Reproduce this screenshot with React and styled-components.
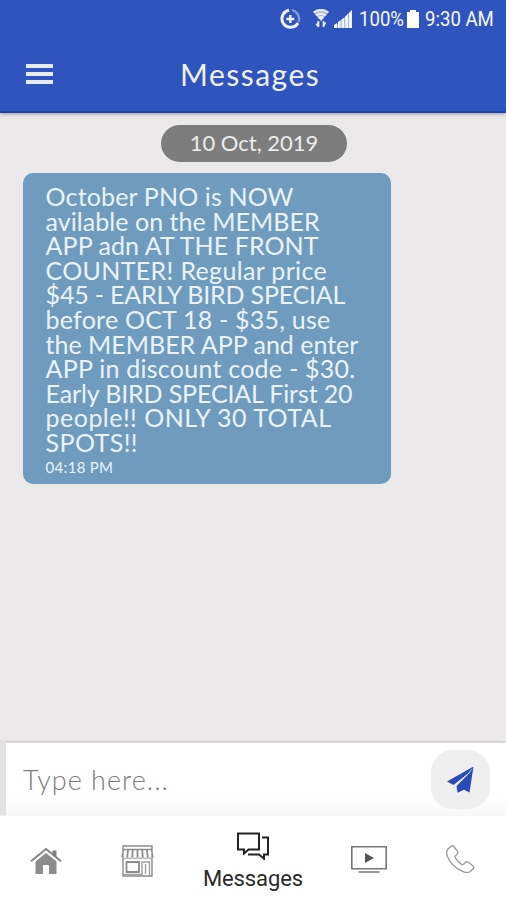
import React from 'react';
import styled, { createGlobalStyle } from 'styled-components';

const GlobalStyle = createGlobalStyle`
* { box-sizing: border-box; }
body { margin: 0; background: #ebe9ea; }
`;

const Screen = styled.div`
width: 506px;
height: 900px;
display: flex;
flex-direction: column;
overflow: hidden;
background: #ebe9ea;
font-family: Lato, "Liberation Sans", sans-serif;
`;

const Header = styled.header`
height: 113px;
flex: none;
background: #3054be;
border-bottom: 2px solid #1746a8;
box-shadow: 0 1px 4px rgba(0, 0, 0, 0.35);
color: #fff;
`;

const StatusBar = styled.div`
height: 37px;
display: flex;
align-items: center;
padding-left: 280px;
`;

const StatusIcon = styled.svg`
flex: none;
margin-left: ${(props) => props.$gap || 0}px;
`;

const StatusText = styled.span`
flex: none;
width: ${(props) => props.$width}px;
margin-left: ${(props) => props.$gap}px;
font: 400 20px/38px Roboto, sans-serif;
color: #f6f8ff;
white-space: nowrap;
transform: scaleX(0.93);
transform-origin: left;
`;

const TitleBar = styled.div`
height: 74px;
display: flex;
align-items: center;
padding-left: 26px;
`;

const MenuButton = styled.div`
width: 27px;
height: 20px;
display: flex;
flex-direction: column;
justify-content: space-between;
`;

const MenuLine = styled.div`
height: 4px;
background: #e6ebfb;
`;

const Title = styled.h1`
margin: 0 0 1px 127px;
font-size: 30px;
font-weight: 400;
letter-spacing: 1.5px;
color: #edf1fd;
`;

const Thread = styled.main`
flex: 1;
display: flex;
flex-direction: column;
padding: 12px 0 0 23px;
`;

const DateChip = styled.div`
width: 186px;
height: 37px;
margin: 0 0 11px 138px;
border-radius: 19px;
background: #7d7d7d;
color: #ececec;
font-size: 22px;
line-height: 36px;
text-align: center;
`;

const Bubble = styled.section`
width: 368px;
height: 311px;
padding: 11px 0 0 22.6px;
border-radius: 10px;
background: #6f9bbf;
color: #eaf3fb;
`;

const Line = styled.div`
height: 24.6px;
font-size: 25px;
line-height: 24.6px;
letter-spacing: ${(props) => props.$spacing}px;
white-space: nowrap;
`;

const Time = styled.div`
font-size: 15px;
line-height: 25px;
letter-spacing: 0.3px;
`;

const Composer = styled.div`
height: 75px;
flex: none;
display: flex;
align-items: center;
margin-left: 6px;
padding: 0 16px 0 17px;
border-top: 2px solid #d9d7d8;
background: linear-gradient(#fff 75%, #f7f7f7);
box-shadow: -6px -1px 0 0 #e3e1e2;
`;

const Placeholder = styled.div`
flex: 1;
font-size: 27px;
font-weight: 300;
letter-spacing: 1px;
color: #7c7c7c;
`;

const SendButton = styled.div`
width: 59px;
height: 59px;
display: flex;
align-items: center;
justify-content: center;
border-radius: 22px;
background: #efefef;
`;

const NavBar = styled.nav`
height: 84px;
flex: none;
display: grid;
grid-template-columns: 91px 92px 140px 92px 91px;
background: #fff;
z-index: 1;
`;

const NavItem = styled.div`
display: flex;
flex-direction: column;
align-items: center;
padding-top: ${(props) => props.$top}px;
`;

const NavLabel = styled.span`
margin-top: 6px;
font: 400 22px/26px Roboto, sans-serif;
letter-spacing: -0.1px;
color: #2a2a2a;
`;

const message = [
    { text: 'October PNO is NOW', spacing: 0.14 },
    { text: 'avilable on the MEMBER', spacing: 0.05 },
    { text: 'APP adn AT THE FRONT', spacing: 0.07 },
    { text: 'COUNTER! Regular price', spacing: 0.33 },
    { text: '$45 - EARLY BIRD SPECIAL', spacing: -0.2 },
    { text: 'before OCT 18 - $35, use', spacing: 0.22 },
    { text: 'the MEMBER APP and enter', spacing: 0 },
    { text: 'APP in discount code - $30.', spacing: 0.24 },
    { text: 'Early BIRD SPECIAL First 20', spacing: -0.14 },
    { text: 'people!! ONLY 30 TOTAL', spacing: 0.47 },
    { text: 'SPOTS!!', spacing: 0.4 },
];

const StatusIcons = () => {
    return(
        <>
            <StatusIcon width="21" height="22" viewBox="0 0 21 22" fill="none">
                <path d="M9 2.2A8.6 8.6 0 1 0 18 15" stroke="#f0f4ff" strokeWidth="3" />
                <path d="M12 2.2A8.8 8.8 0 0 1 18.4 14" stroke="#7f9ae0" strokeWidth="2.4" />
                <path d="M10.3 7v8M6.3 11h8" stroke="#f0f4ff" strokeWidth="2.4" />
            </StatusIcon>
            <StatusIcon $gap={12} width="16" height="19" viewBox="0 0 16 19" fill="none" stroke="#e8eeff" strokeWidth="2">
                <path d="M.2 3Q8-3 15.800 3L8 12z" fill="#a9baeb" stroke="none" />
                <path d="M.7 3.5Q8-1.6 15.3 3.5M3 6.5Q8 2.8 13 6.5M5.3 9Q8 7 10.7 9" />
                <path d="M6 9h4l-2 3z" fill="#e8eeff" stroke="none" />
                <path d="M5.500 12v6M10.500 12v6" strokeWidth="1.6" />
                <path d="M3 16l2.500-4v6zM13 14l-2.500 4v-5z" fill="#e8eeff" strokeWidth=".5" />
            </StatusIcon>
            <StatusIcon $gap={5} width="18" height="18" viewBox="0 0 18 18" fill="#f0f4ff">
                <path d="M0 18v-3l3-2v5zM4 18v-6l2.6-2v8zM7.500 18V9.500l2.800-2V18zM11.200 18V6.500L14 4v14zM14.800 18V3L18 0v18z" />
                <path d="M0 17.500L18 0v18H0z" opacity=".5" />
            </StatusIcon>
        </>
    )
}

const HomeIcon = () => (
    <svg width="32" height="28" viewBox="0 0 32 28">
        <path d="M1 14.2L16 2l15 12.2" fill="none" stroke="#858585" strokeWidth="2" />
        <path d="M22.5 3.5h4v7l-4-3.2z" fill="#808080" />
        <path d="M5.5 14.5L16 6l10.5 8.5V27H19v-8q0-1-1-1h-4q-1 0-1 1v8H5.5z" fill="#8c8c8c" />
    </svg>
);

const StoreIcon = () => (
    <svg width="33" height="32" viewBox="0 0 33 32" fill="none" stroke="#8c8c8c" strokeWidth="1.4">
        <path d="M2 1h29v30H2zM2 4.5h29M1 12.5L2.5 5M32 12.5L30.5 5" />
        <path d="M7 5l-.8 7.500M11.700 5l-.4 7.500M16.500 5v7.500M21.300 5l.4 7.500M26 5l.8 7.500" strokeWidth="1.8" />
        <path d="M1 12.500q2.600 2 5.200 0 2.600 2 5.200 0 2.600 2 5.200 0 2.600 2 5.200 0 2.600 2 5.200 0 2.600 2 5.200 0" stroke="#aaa" />
        <path d="M5.500 17h12.500v10h-12.500z" strokeWidth="1.8" />
        <path d="M21 31V17h7.500v14M24.500 19v10M2 29.500h18.500" stroke="#a0a0a0" />
    </svg>
);

const ChatIcon = () => (
    <svg width="32" height="28" viewBox="0 0 32 28" fill="none" stroke="#222" strokeWidth="2">
        <path d="M1 1.5h21v16H11.5L7 21.5v-4H1z" />
        <path d="M25 5.5h6v17h-4v4.2l-5-4.2H11" />
    </svg>
);

const VideoIcon = () => (
    <svg width="36" height="28" viewBox="0 0 36 28">
        <path d="M.8.8h34.4v22H.8z" fill="none" stroke="#777" strokeWidth="1.6" />
        <path d="M14 7l9 5-9 5z" fill="#555" />
        <path d="M7.5 26h21" stroke="#999" strokeWidth="2" />
    </svg>
);

const PhoneIcon = () => (
    <svg width="29" height="29" viewBox="0 0 29 29" fill="none" stroke="#999" strokeWidth="1.3" strokeLinejoin="round">
        <path d="M2.2 3.8L5 1.2q1.6-1 2.8.3l3.7 4.8q1 1.5-.3 2.8L9.3 11q-.7.7-.1 1.7 2.3 4 6.5 6.7 1 .6 1.8-.1l2-2q1.3-1.1 2.7-.1l4.7 3.6q1.6 1.4.3 2.9l-2.8 2.8q-2.6 2-7.3.1Q5.6 21.8 1.3 11.2q-1.5-4.9.9-7.4z" />
    </svg>
);

const App = () => {
    return(
        <Screen>
            <GlobalStyle />
            <Header>
                <StatusBar>
                    <StatusIcons />
                    <StatusText $gap={7} $width={44}>100%</StatusText>
                    <StatusIcon $gap={4} width="12" height="18" viewBox="0 0 12 18" fill="#fff">
                        <path d="M3 0h6v2h3v16H0V2h3z" />
                    </StatusIcon>
                    <StatusText $gap={6} $width={70}>9:30 AM</StatusText>
                </StatusBar>
                <TitleBar>
                    <MenuButton>
                        <MenuLine />
                        <MenuLine />
                        <MenuLine />
                    </MenuButton>
                    <Title>Messages</Title>
                </TitleBar>
            </Header>
            <Thread>
                <DateChip>10 Oct, 2019</DateChip>
                <Bubble>
                    {
                        message.map((line) =>
                            <Line key={line.text} $spacing={line.spacing}>{line.text}</Line>
                        )
                    }
                    <Time>04:18 PM</Time>
                </Bubble>
            </Thread>
            <Composer>
                <Placeholder>Type here...</Placeholder>
                <SendButton>
                    <svg width="27" height="27" viewBox="0 0 27 27" fill="#2a4bb8">
                        <path d="M26.500 .5L0 15.500l6.500 3.500L21.500 7zM26.500 .5L22.500 26.500l-5.500-2.800-6.500 3-1-6.700L22.500 7z" />
                    </svg>
                </SendButton>
            </Composer>
            <NavBar>
                <NavItem $top={31}><HomeIcon /></NavItem>
                <NavItem $top={29}><StoreIcon /></NavItem>
                <NavItem $top={16}>
                    <ChatIcon />
                    <NavLabel>Messages</NavLabel>
                </NavItem>
                <NavItem $top={30}><VideoIcon /></NavItem>
                <NavItem $top={29}><PhoneIcon /></NavItem>
            </NavBar>
        </Screen>
    )
}

export default App;
